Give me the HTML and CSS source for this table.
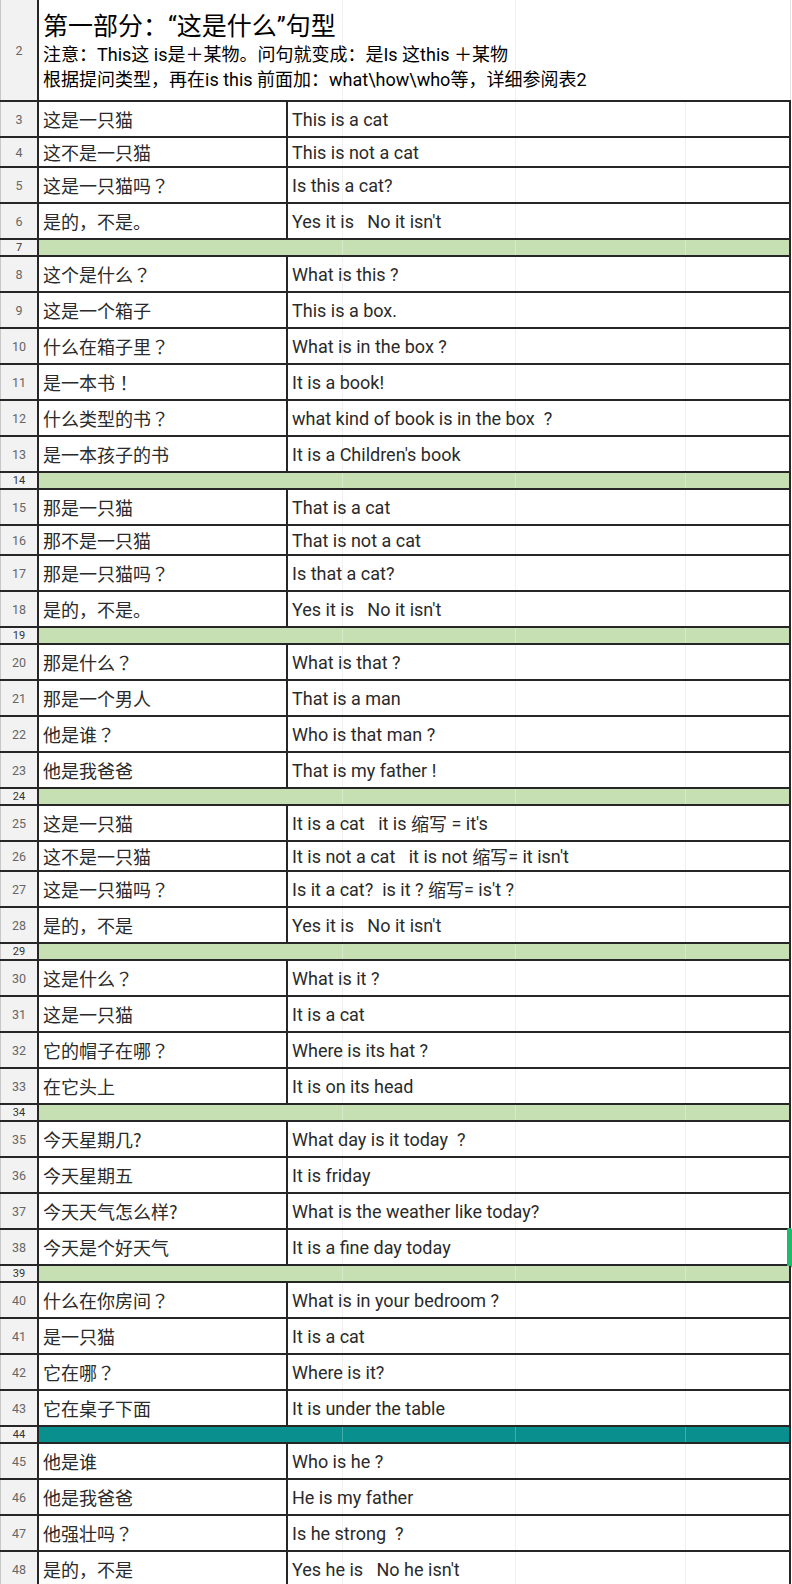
FILE: index.html
```html
<!DOCTYPE html>
<html lang="zh-CN">
<head>
<meta charset="utf-8">
<title>这是什么 句型</title>
<link rel="stylesheet" href="styles.css">
</head>
<body>
<div class="sheet">
  <div class="row hd">
    <div class="num">2</div>
    <div class="head">
      <div class="t1">第一部分：“这是什么”句型</div>
      <div class="t2">注意：This这 is是<span class="zh">＋</span>某物。问句就变成：是Is 这this <span class="zh">＋</span>某物</div>
      <div class="t2">根据提问类型，再在is this 前面加：what\how\who等，详细参阅表2</div>
    </div>
  </div>

  <div class="row"><div class="num">3</div><div class="cn">这是一只猫</div><div class="en">This is a cat</div></div>
  <div class="row short"><div class="num">4</div><div class="cn">这不是一只猫</div><div class="en">This is not a cat</div></div>
  <div class="row"><div class="num">5</div><div class="cn">这是一只猫吗<span class="fw">？</span></div><div class="en">Is this a cat?</div></div>
  <div class="row"><div class="num">6</div><div class="cn">是的，不是。</div><div class="en">Yes it is   No it isn't</div></div>
  <div class="row sep"><div class="num">7</div><div class="fill"></div></div>

  <div class="row"><div class="num">8</div><div class="cn">这个是什么<span class="fw">？</span></div><div class="en">What is this ?</div></div>
  <div class="row"><div class="num">9</div><div class="cn">这是一个箱子</div><div class="en">This is a box.</div></div>
  <div class="row"><div class="num">10</div><div class="cn">什么在箱子里<span class="fw">？</span></div><div class="en">What is in the box ?</div></div>
  <div class="row"><div class="num">11</div><div class="cn">是一本书<span class="fw">！</span></div><div class="en">It is a book!</div></div>
  <div class="row"><div class="num">12</div><div class="cn">什么类型的书<span class="fw">？</span></div><div class="en">what kind of book is in the box  ?</div></div>
  <div class="row"><div class="num">13</div><div class="cn">是一本孩子的书</div><div class="en">It is a Children's book</div></div>
  <div class="row sep"><div class="num">14</div><div class="fill"></div></div>

  <div class="row"><div class="num">15</div><div class="cn">那是一只猫</div><div class="en">That is a cat</div></div>
  <div class="row short"><div class="num">16</div><div class="cn">那不是一只猫</div><div class="en">That is not a cat</div></div>
  <div class="row"><div class="num">17</div><div class="cn">那是一只猫吗<span class="fw">？</span></div><div class="en">Is that a cat?</div></div>
  <div class="row"><div class="num">18</div><div class="cn">是的，不是。</div><div class="en">Yes it is   No it isn't</div></div>
  <div class="row sep"><div class="num">19</div><div class="fill"></div></div>

  <div class="row"><div class="num">20</div><div class="cn">那是什么<span class="fw">？</span></div><div class="en">What is that ?</div></div>
  <div class="row"><div class="num">21</div><div class="cn">那是一个男人</div><div class="en">That is a man</div></div>
  <div class="row"><div class="num">22</div><div class="cn">他是谁<span class="fw">？</span></div><div class="en">Who is that man ?</div></div>
  <div class="row"><div class="num">23</div><div class="cn">他是我爸爸</div><div class="en">That is my father !</div></div>
  <div class="row sep"><div class="num">24</div><div class="fill"></div></div>

  <div class="row"><div class="num">25</div><div class="cn">这是一只猫</div><div class="en">It is a cat   it is <span class="zh">缩写</span> = it's</div></div>
  <div class="row short"><div class="num">26</div><div class="cn">这不是一只猫</div><div class="en">It is not a cat   it is not <span class="zh">缩写</span>= it isn't</div></div>
  <div class="row"><div class="num">27</div><div class="cn">这是一只猫吗<span class="fw">？</span></div><div class="en">Is it a cat?  is it ? <span class="zh">缩写</span>= is't ?</div></div>
  <div class="row"><div class="num">28</div><div class="cn">是的，不是</div><div class="en">Yes it is   No it isn't</div></div>
  <div class="row sep"><div class="num">29</div><div class="fill"></div></div>

  <div class="row"><div class="num">30</div><div class="cn">这是什么<span class="fw">？</span></div><div class="en">What is it ?</div></div>
  <div class="row"><div class="num">31</div><div class="cn">这是一只猫</div><div class="en">It is a cat</div></div>
  <div class="row"><div class="num">32</div><div class="cn">它的帽子在哪<span class="fw">？</span></div><div class="en">Where is its hat ?</div></div>
  <div class="row"><div class="num">33</div><div class="cn">在它头上</div><div class="en">It is on its head</div></div>
  <div class="row sep"><div class="num">34</div><div class="fill"></div></div>

  <div class="row"><div class="num">35</div><div class="cn">今天星期几?</div><div class="en">What day is it today  ?</div></div>
  <div class="row"><div class="num">36</div><div class="cn">今天星期五</div><div class="en">It is friday</div></div>
  <div class="row"><div class="num">37</div><div class="cn">今天天气怎么样?</div><div class="en">What is the weather like today?</div></div>
  <div class="row"><div class="num">38</div><div class="cn">今天是个好天气</div><div class="en">It is a fine day today</div><div class="handle"></div></div>
  <div class="row sep"><div class="num">39</div><div class="fill"></div></div>

  <div class="row"><div class="num">40</div><div class="cn">什么在你房间<span class="fw">？</span></div><div class="en">What is in your bedroom ?</div></div>
  <div class="row"><div class="num">41</div><div class="cn">是一只猫</div><div class="en">It is a cat</div></div>
  <div class="row"><div class="num">42</div><div class="cn">它在哪<span class="fw">？</span></div><div class="en">Where is it?</div></div>
  <div class="row"><div class="num">43</div><div class="cn">它在桌子下面</div><div class="en">It is under the table</div></div>
  <div class="row sep teal"><div class="num">44</div><div class="fill"></div></div>

  <div class="row"><div class="num">45</div><div class="cn">他是谁</div><div class="en">Who is he ?</div></div>
  <div class="row"><div class="num">46</div><div class="cn">他是我爸爸</div><div class="en">He is my father</div></div>
  <div class="row"><div class="num">47</div><div class="cn">他强壮吗<span class="fw">？</span></div><div class="en">Is he strong  ?</div></div>
  <div class="row"><div class="num">48</div><div class="cn">是的，不是</div><div class="en">Yes he is   No he isn't</div></div>
</div>
</body>
</html>
```

FILE: styles.css
```css
html, body {
  margin: 0;
  padding: 0;
  background: #ffffff;
  overflow: hidden;
}

body {
  font-family: Roboto, "Noto Sans CJK SC", sans-serif;
  color: #2a2a2a;
}

.sheet {
  width: 791px;
  display: flex;
  flex-direction: column;
}

.row {
  position: relative;
  display: flex;
  height: 36px;
  box-sizing: border-box;
  border-bottom: 2px solid #262626;
}

.row.short { height: 30px; }
.row.sep { height: 17px; }
.row.hd { height: 102px; }

.num {
  flex: 0 0 39px;
  box-sizing: border-box;
  border-left: 1px solid #c8c8c8;
  border-right: 2px solid #262626;
  background: #f2f2f2;
  color: #666;
  font-family: Roboto, sans-serif;
  font-size: 12.5px;
  display: flex;
  align-items: center;
  justify-content: center;
}

.sep .num {
  font-size: 11px;
  color: #333;
  line-height: 1;
}

.cn {
  flex: 0 0 249px;
  box-sizing: border-box;
  border-right: 2px solid #262626;
  padding-left: 4px;
  font-family: "Noto Sans CJK SC", sans-serif;
  font-size: 18px;
  display: flex;
  align-items: center;
  white-space: pre;
}

.fw {
  font-family: "Noto Sans CJK TC", "Noto Sans CJK SC", sans-serif;
}

.en {
  flex: 1 1 auto;
  box-sizing: border-box;
  border-right: 2px solid #262626;
  padding-left: 4px;
  font-size: 18px;
  display: flex;
  align-items: center;
  white-space: pre;
  background:
    linear-gradient(#f0f0f0, #f0f0f0) no-repeat 54px 0 / 1px 100%,
    linear-gradient(#f0f0f0, #f0f0f0) no-repeat 227px 0 / 1px 100%,
    linear-gradient(#f0f0f0, #f0f0f0) no-repeat 397px 0 / 1px 100%;
}

.zh {
  font-family: "Noto Sans CJK SC", sans-serif;
}

.fill {
  flex: 1 1 auto;
  box-sizing: border-box;
  border-right: 2px solid #262626;
  background:
    linear-gradient(rgba(255,255,255,.3), rgba(255,255,255,.3)) no-repeat 303px 0 / 1px 100%,
    linear-gradient(rgba(255,255,255,.3), rgba(255,255,255,.3)) no-repeat 476px 0 / 1px 100%,
    linear-gradient(rgba(255,255,255,.3), rgba(255,255,255,.3)) no-repeat 646px 0 / 1px 100%,
    #c6e0b4;
}

.teal .fill {
  background:
    linear-gradient(rgba(255,255,255,.25), rgba(255,255,255,.25)) no-repeat 303px 0 / 1px 100%,
    linear-gradient(rgba(255,255,255,.25), rgba(255,255,255,.25)) no-repeat 476px 0 / 1px 100%,
    linear-gradient(rgba(255,255,255,.25), rgba(255,255,255,.25)) no-repeat 646px 0 / 1px 100%,
    #0a8f8f;
}

.head {
  flex: 1 1 auto;
  box-sizing: border-box;
  border-right: 1px solid #e2e2e2;
  padding-left: 4px;
  padding-top: 3px;
  display: flex;
  flex-direction: column;
  justify-content: center;
  color: #000;
  white-space: pre;
  background:
    linear-gradient(#f0f0f0, #f0f0f0) no-repeat 303px 0 / 1px 100%,
    linear-gradient(#f0f0f0, #f0f0f0) no-repeat 476px 0 / 1px 100%;
}

.t1 {
  font-family: Roboto, "Noto Sans CJK SC", sans-serif;
  font-size: 25px;
  line-height: 29px;
}

.t2 {
  font-family: Roboto, "Noto Sans CJK SC", sans-serif;
  font-size: 18px;
  line-height: 25px;
}

.handle {
  position: absolute;
  right: -1px;
  top: -2px;
  width: 5px;
  height: 40px;
  border-radius: 2px;
  background: #1dbb6c;
}
```
